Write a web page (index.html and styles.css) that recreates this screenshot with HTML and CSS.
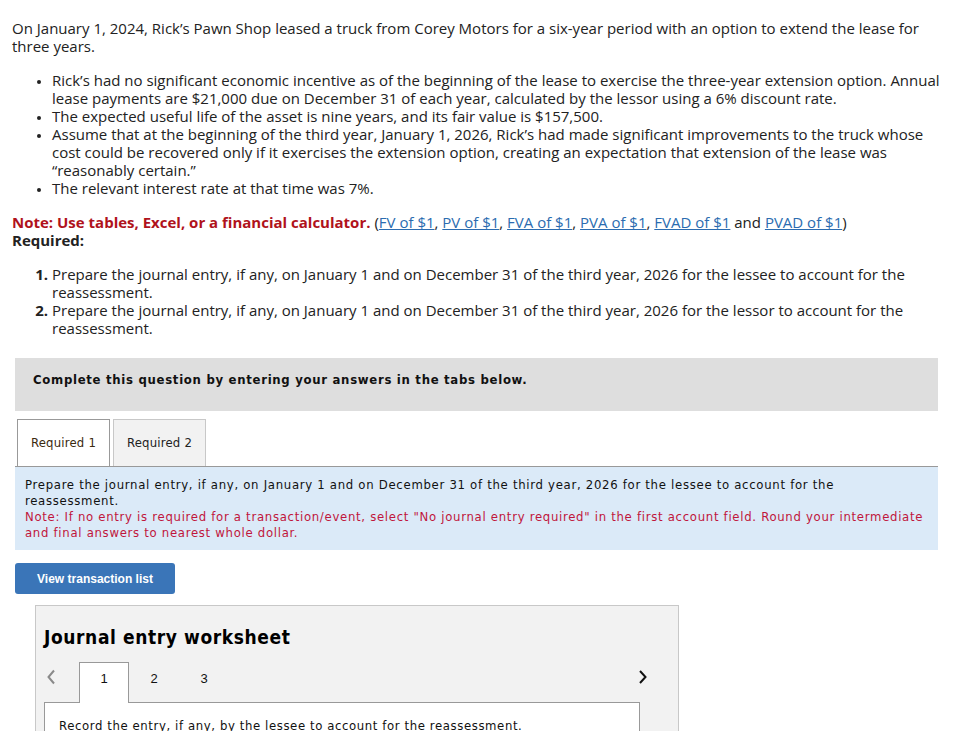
FILE: index.html
```html
<!DOCTYPE html>
<html>
<head>
<meta charset="utf-8">
<link rel="stylesheet" href="styles.css">
</head>
<body>
<div class="page">
  <p class="intro">On January 1, 2024, Rick’s Pawn Shop leased a truck from Corey Motors for a six-year period with an option to extend the lease for three years.</p>
  <ul class="facts">
    <li>Rick’s had no significant economic incentive as of the beginning of the lease to exercise the three-year extension option. Annual lease payments are $21,000 due on December 31 of each year, calculated by the lessor using a 6% discount rate.</li>
    <li>The expected useful life of the asset is nine years, and its fair value is $157,500.</li>
    <li>Assume that at the beginning of the third year, January 1, 2026, Rick’s had made significant improvements to the truck whose cost could be recovered only if it exercises the extension option, creating an expectation that extension of the lease was “reasonably certain.”</li>
    <li>The relevant interest rate at that time was 7%.</li>
  </ul>
  <p class="note"><strong class="red">Note: Use tables, Excel, or a financial calculator.</strong> (<a href="#">FV of $1</a>, <a href="#">PV of $1</a>, <a href="#">FVA of $1</a>, <a href="#">PVA of $1</a>, <a href="#">FVAD of $1</a> and <a href="#">PVAD of $1</a>)<br><strong>Required:</strong></p>
  <ol class="reqs">
    <li><span class="num">1.</span><span>Prepare the journal entry, if any, on January 1 and on December 31 of the third year, 2026 for the lessee to account for the reassessment.</span></li>
    <li><span class="num">2.</span><span>Prepare the journal entry, if any, on January 1 and on December 31 of the third year, 2026 for the lessor to account for the reassessment.</span></li>
  </ol>

  <div class="answer">
    <div class="banner">Complete this question by entering your answers in the tabs below.</div>
    <div class="tabs">
      <div class="tab active">Required 1</div>
      <div class="tab">Required 2</div>
    </div>
    <div class="instructions">
      Prepare the journal entry, if any, on January 1 and on December 31 of the third year, 2026 for the lessee to account for the reassessment.<br>
      <span class="warn">Note: If no entry is required for a transaction/event, select "No journal entry required" in the first account field. Round your intermediate and final answers to nearest whole dollar.</span>
    </div>
    <button class="btn">View transaction list</button>
    <div class="worksheet">
      <h2>Journal entry worksheet</h2>
      <div class="ws-nav">
        <span class="arrow prev"><svg width="10" height="16" viewBox="0 0 10 16"><path d="M8 1.5 L2.5 8 L8 14.5" fill="none" stroke="#8a8a8a" stroke-width="2"/></svg></span>
        <span class="ws-tab active">1</span>
        <span class="ws-tab">2</span>
        <span class="ws-tab">3</span>
        <span class="arrow next"><svg width="10" height="16" viewBox="0 0 10 16"><path d="M2 2 L7.5 8 L2 14" fill="none" stroke="#111" stroke-width="2"/></svg></span>
      </div>
      <div class="ws-body">Record the entry, if any, by the lessee to account for the reassessment.</div>
    </div>
  </div>
</div>
</body>
</html>
```

FILE: styles.css
```css
html, body {
  margin: 0;
  padding: 0;
  background: #fff;
}
.page {
  padding: 19px 12px 0 12px;
  font-family: "Open Sans", "Liberation Sans", sans-serif;
  font-size: 15px;
  line-height: 18px;
  color: #222;
  width: 943px;
}
.intro {
  margin: 0;
}
.facts {
  margin: 16px 0 0 0;
  padding-left: 40px;
}
.facts li::marker {
  font-size: 11px;
}
.note {
  margin: 16px 0 0 0;
}
.red {
  color: #b0121b;
}
.note a {
  color: #2b6cb0;
  text-decoration: underline;
}
.reqs {
  list-style: none;
  margin: 16px 0 0 0;
  padding-left: 20px;
}
.reqs li {
  display: flex;
}
.reqs .num {
  font-weight: bold;
  width: 16px;
  text-align: right;
  padding-right: 4px;
  flex: none;
}
.answer {
  margin-top: 21px;
  margin-left: 3px;
  width: 923px;
  font-family: "DejaVu Sans", sans-serif;
  font-stretch: condensed;
  font-size: 13px;
  line-height: 16px;
  letter-spacing: 0.6px;
  color: #111;
}
.banner {
  background: #dedede;
  font-weight: bold;
  letter-spacing: 0.7px;
  padding: 14px 18px 23px;
}
.tabs {
  display: flex;
  gap: 3px;
  margin-top: 8px;
  padding-left: 2px;
  border-bottom: 1px solid #999;
}
.tab {
  width: 91px;
  height: 46px;
  border: 1px solid #c8c8c8;
  border-bottom: none;
  background: #f2f2f2;
  display: flex;
  align-items: center;
  justify-content: center;
  color: #222;
  letter-spacing: 0.2px;
}
.tab.active {
  background: #fff;
  border-color: #999;
  color: #3b2a10;
}
.instructions {
  background: #dbeaf8;
  padding: 10px 10px 9px;
  color: #111;
  letter-spacing: 0.7px;
}
.warn {
  color: #c0163c;
}
.btn {
  display: block;
  margin-top: 13px;
  width: 160px;
  height: 31px;
  border: none;
  border-radius: 3px;
  background: #3a75b8;
  color: #fff;
  font-family: "Liberation Sans", Arial, sans-serif;
  font-stretch: normal;
  font-weight: bold;
  font-size: 12px;
  letter-spacing: 0;
  cursor: pointer;
}
.worksheet {
  margin: 11px 0 0 20px;
  width: 644px;
  height: 200px;
  background: #f2f2f2;
  border: 1px solid #c8c8c8;
  padding: 0 38px 0 8px;
  box-sizing: border-box;
}
.worksheet h2 {
  margin: 19px 0 0 0;
  font-size: 19px;
  line-height: 24px;
  font-weight: bold;
  letter-spacing: 0.6px;
  color: #000;
}
.ws-nav {
  display: flex;
  align-items: flex-end;
  margin-top: 13px;
  height: 40px;
  position: relative;
  z-index: 1;
}
.arrow {
  display: flex;
  align-items: flex-start;
  padding-top: 7px;
  height: 40px;
  box-sizing: border-box;
}
.arrow.prev {
  margin-left: 2px;
  width: 33px;
}
.arrow.next {
  margin-left: auto;
  margin-right: -8px;
}
.ws-tab {
  width: 50px;
  height: 40px;
  box-sizing: border-box;
  display: flex;
  align-items: flex-start;
  justify-content: center;
  padding-top: 8px;
  font-family: "Liberation Sans", Arial, sans-serif;
  font-stretch: normal;
  font-size: 13px;
  line-height: 15px;
  letter-spacing: 0;
  color: #111;
  border: 1px solid transparent;
  border-bottom: none;
}
.ws-tab.active {
  background: #fff;
  border-color: #999;
  height: 41px;
  margin-bottom: -1px;
}
.ws-body {
  background: #fff;
  border: 1px solid #999;
  padding: 15px 14px;
  height: 100px;
}
```
